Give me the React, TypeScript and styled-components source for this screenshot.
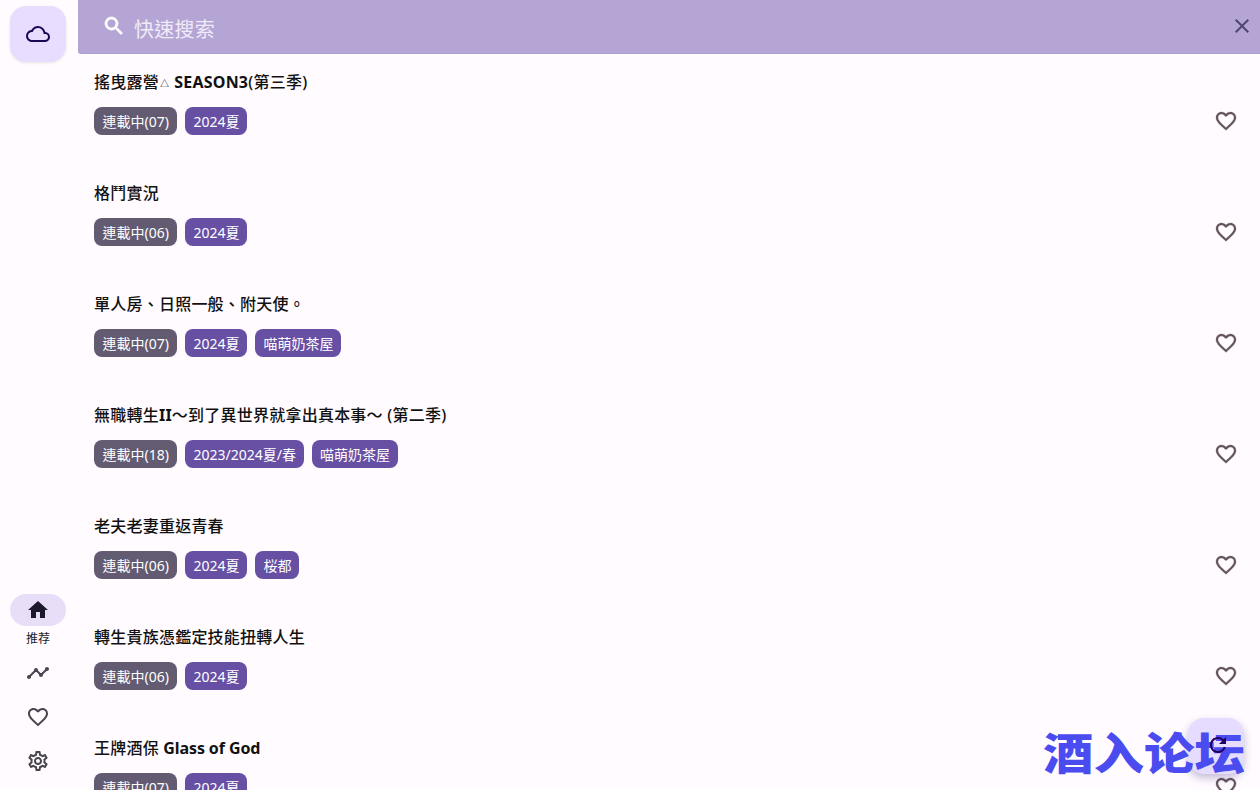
import React from "react";
import styled, { createGlobalStyle } from "styled-components";
import {
  MdOutlineCloud,
  MdHome,
  MdTimeline,
  MdFavoriteBorder,
  MdOutlineSettings,
  MdSearch,
  MdClose,
  MdRefresh,
} from "react-icons/md";

const Global = createGlobalStyle`
  html, body { margin: 0; padding: 0; height: 100%; background: #fffbff; overflow: hidden; }
  #root { height: 100%; }
  * { box-sizing: border-box; }
`;

const FONT = `"Noto Sans", "Open Sans", "Noto Sans CJK TC", sans-serif`;

const Page = styled.div`
  position: relative;
  display: flex;
  width: 1260px;
  height: 790px;
  overflow: hidden;
  background: #fffbff;
  font-family: ${FONT};
  color: #1c1b1f;
`;

const Rail = styled.nav`
  flex: 0 0 78px;
  display: flex;
  flex-direction: column;
  justify-content: space-between;
  align-items: center;
  padding: 6px 2px 17px 0;
`;

const CloudButton = styled.div`
  width: 56px;
  height: 56px;
  border-radius: 16px;
  background: #e9ddff;
  display: flex;
  align-items: center;
  justify-content: center;
  color: #1b0a52;
  box-shadow: 0 1px 3px rgba(0, 0, 0, 0.1);
`;

const NavList = styled.div`
  display: flex;
  flex-direction: column;
  align-items: center;
`;

const HomePill = styled.div`
  width: 56px;
  height: 32px;
  border-radius: 16px;
  background: #e8def8;
  display: flex;
  align-items: center;
  justify-content: center;
  color: #1d192b;
`;

const NavLabel = styled.div`
  font-size: 12px;
  line-height: 16px;
  margin-top: 5px;
  margin-bottom: 14px;
  color: #1c1b1f;
`;

const NavIcon = styled.div<{ $gap?: number }>`
  width: 24px;
  height: 24px;
  margin-top: ${(p) => p.$gap ?? 0}px;
  color: #49454f;
  display: flex;
  align-items: center;
  justify-content: center;
`;

const Main = styled.div`
  flex: 1;
  min-width: 0;
  display: flex;
  flex-direction: column;
`;

const SearchBar = styled.div`
  flex: 0 0 54px;
  display: flex;
  align-items: center;
  background: #b4a5d5;
  padding: 0 6px 0 24px;
  border-bottom: 1px solid #a9a0dc;
  border-radius: 0 0 0 3px;
`;

const SearchIcon = styled.div`
  width: 24px;
  height: 24px;
  color: #ffffff;
  margin-top: -1px;
  svg path:not([fill="none"]) {
    stroke: currentColor;
    stroke-width: 0.8;
  }
`;

const SearchText = styled.div`
  flex: 1;
  margin-left: 8px;
  font-size: 20px;
  letter-spacing: 0.25px;
  color: #f1ebf8;
  line-height: 24px;
  margin-top: 7px;
`;

const CloseIcon = styled.div`
  width: 24px;
  height: 24px;
  color: #4f4672;
  margin-top: -1px;
`;

const List = styled.div`
  flex: 1;
  min-height: 0;
  overflow: hidden;
`;

const Row = styled.div`
  height: 111px;
  display: flex;
  align-items: flex-start;
  padding: 16px 22px 0 16px;
`;

const RowBody = styled.div`
  flex: 1;
  min-width: 0;
`;

const Title = styled.div`
  height: 24px;
  font-size: 16px;
  font-weight: 500;
  line-height: 24px;
  letter-spacing: 0.23px;
  color: #111;
  white-space: pre;
`;

const Latin = styled.span<{ $tight?: boolean }>`
  font-weight: 700;
  letter-spacing: ${(p) => (p.$tight ? "-0.1px" : "inherit")};
`;

const Small = styled.span`
  font-size: 9px;
  line-height: 0;
  margin: 0 5px 0 1px;
  vertical-align: 1px;
`;

const Tags = styled.div`
  display: flex;
  gap: 8px;
  margin-top: 13px;
`;

const Tag = styled.span<{ $kind: "status" | "info" }>`
  height: 28px;
  padding: 0 ${(p) => (p.$kind === "status" ? "8.5px" : "8px")};
  border-radius: 8px;
  font-size: 14px;
  line-height: 29px;
  color: #fff;
  background: ${(p) => (p.$kind === "status" ? "#625b71" : "#6750a4")};
`;

const Heart = styled.div`
  width: 24px;
  height: 24px;
  color: #64545a;
  margin-top: 39px;
  svg path:not([fill="none"]) {
    stroke: currentColor;
    stroke-width: 0.3;
  }
`;

const Fab = styled.div`
  position: absolute;
  right: 16px;
  bottom: 16px;
  width: 56px;
  height: 56px;
  border-radius: 16px;
  background: #e6dcff;
  box-shadow: 0 4px 8px rgba(60, 40, 120, 0.3);
  display: flex;
  align-items: center;
  justify-content: center;
  color: #21005d;
`;

const FabIcon = styled.div`
  position: relative;
  z-index: 2;
  width: 24px;
  height: 24px;
  margin: -2px 0 0 4px;
`;

const Watermark = styled.div`
  position: absolute;
  z-index: 1;
  left: 1043px;
  top: 720px;
  width: 205px;
  font-family: "Noto Sans CJK SC", sans-serif;
  font-size: 50px;
  line-height: 70px;
  font-weight: 900;
  color: #4a4cf0;
  white-space: nowrap;
  transform-origin: left top;
  transform: scale(1.01, 0.88);
`;

const items: { key: string; title: React.ReactNode; tags: string[] }[] = [
  {
    key: "yuru",
    title: (
      <>
        搖曳露營<Small>△</Small>
        <Latin>SEASON3</Latin>(第三季)
      </>
    ),
    tags: ["連載中(07)", "2024夏"],
  },
  { key: "kakuto", title: "格鬥實況", tags: ["連載中(06)", "2024夏"] },
  { key: "single", title: "單人房、日照一般、附天使。", tags: ["連載中(07)", "2024夏", "喵萌奶茶屋"] },
  {
    key: "mushoku",
    title: (
      <>
        無職轉生<Latin>II</Latin>～到了異世界就拿出真本事～ (第二季)
      </>
    ),
    tags: ["連載中(18)", "2023/2024夏/春", "喵萌奶茶屋"],
  },
  { key: "couple", title: "老夫老妻重返青春", tags: ["連載中(06)", "2024夏", "桜都"] },
  { key: "noble", title: "轉生貴族憑鑑定技能扭轉人生", tags: ["連載中(06)", "2024夏"] },
  {
    key: "bar",
    title: (
      <>
        王牌酒保 <Latin $tight>Glass of God</Latin>
      </>
    ),
    tags: ["連載中(07)", "2024夏"],
  },
];

export default function App() {
  return (
    <Page>
      <Global />
      <Rail>
        <CloudButton>
          <MdOutlineCloud size={24} />
        </CloudButton>
        <NavList>
          <HomePill>
            <MdHome size={24} />
          </HomePill>
          <NavLabel>推荐</NavLabel>
          <NavIcon>
            <MdTimeline size={24} />
          </NavIcon>
          <NavIcon $gap={20}>
            <MdFavoriteBorder size={24} />
          </NavIcon>
          <NavIcon $gap={20}>
            <MdOutlineSettings size={24} />
          </NavIcon>
        </NavList>
      </Rail>
      <Main>
        <SearchBar>
          <SearchIcon>
            <MdSearch size={24} />
          </SearchIcon>
          <SearchText>快速搜索</SearchText>
          <CloseIcon>
            <MdClose size={24} />
          </CloseIcon>
        </SearchBar>
        <List>
          {items.map((it) => (
            <Row key={it.key}>
              <RowBody>
                <Title>{it.title}</Title>
                <Tags>
                  {it.tags.map((t, i) => (
                    <Tag key={t} $kind={i === 0 ? "status" : "info"}>
                      {t}
                    </Tag>
                  ))}
                </Tags>
              </RowBody>
              <Heart>
                <MdFavoriteBorder size={24} />
              </Heart>
            </Row>
          ))}
        </List>
      </Main>
      <Fab>
        <FabIcon>
          <MdRefresh size={24} />
        </FabIcon>
      </Fab>
      <Watermark>酒入论坛</Watermark>
    </Page>
  );
}
